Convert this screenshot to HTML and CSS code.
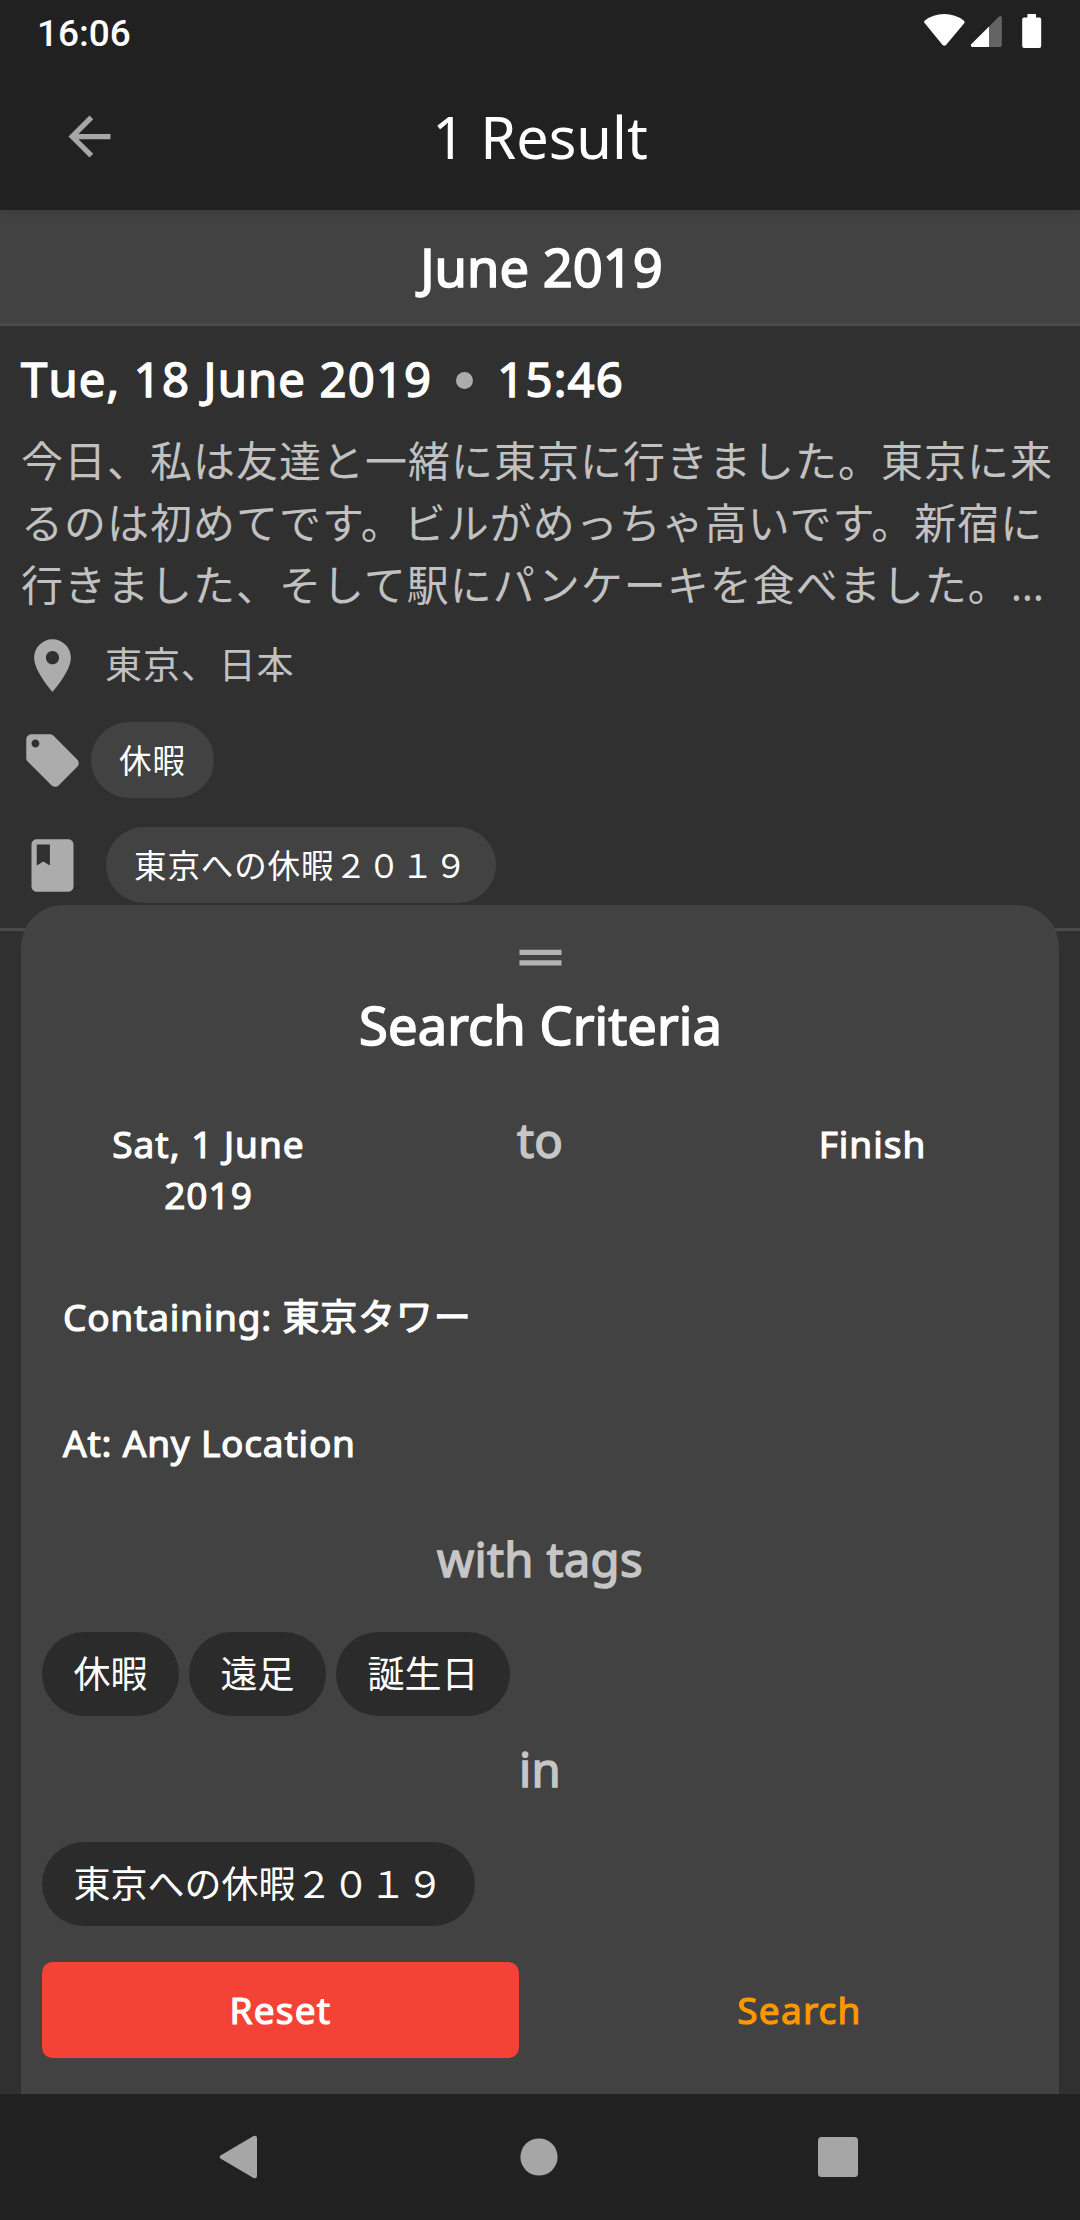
FILE: index.html
```html
<!DOCTYPE html>
<html lang="ja">
<head>
<meta charset="utf-8">
<title>1 Result</title>
<link rel="stylesheet" href="styles.css">
</head>
<body>
<div class="screen">
  <header class="top">
    <div class="status">
      <span class="clock">16:06</span>
      <svg class="status-icons" width="120" height="40" viewBox="0 0 120 40">
        <path fill="#fff" d="M1 11.6Q-.8 10 .9 8.5Q9 2 20.3 2Q31.500 2 39.700 8.500Q41.300 10 40 11.600L22 33Q20.300 34.600 18.600 33Z"/>
        <path fill="#646464" d="M65 14.500L74.500 5Q77.800 2.800 77.800 6V33Q77.800 35 75.800 35H65Z"/>
        <path fill="#fff" d="M65 14.500V35H48Q46.200 34.200 47.200 32.300Z"/>
        <path fill="#fff" d="M103.400 2h8.600v3.600h3.300q1.900 0 1.900 1.900V34q0 1.900-1.900 1.900h-15.200q-1.900 0-1.900-1.900V7.500q0-1.900 1.900-1.900h3.300Z"/>
      </svg>
    </div>
    <div class="appbar">
      <svg class="icon" viewBox="0 0 24 24"><path d="M20 11H7.830l5.590-5.590L12 4l-8 8 8 8 1.410-1.410L7.830 13H20v-2z"/></svg>
      <h1 class="title">1 Result</h1>
    </div>
  </header>

  <main class="results">
    <h2 class="month">June 2019</h2>
    <article class="entry">
      <div class="when"><span>Tue, 18 June 2019</span><i class="dot"></i><span>15:46</span></div>
      <p class="body">今日、私は友達と一緒に東京に行きました。東京に来<br>るのは初めてです。ビルがめっちゃ高いです。新宿に<br>行きました、そして駅にパンケーキを食べました。…</p>
      <div class="meta place">
        <svg class="icon" viewBox="0 0 24 24"><path d="M12 2C8.130 2 5 5.130 5 9c0 5.250 7 13 7 13s7-7.750 7-13c0-3.870-3.130-7-7-7zm0 9.500c-1.380 0-2.500-1.120-2.500-2.500s1.120-2.500 2.500-2.500 2.500 1.120 2.500 2.500-1.120 2.500-2.500 2.500z"/></svg>
        <span>東京、日本</span>
      </div>
      <div class="meta tags">
        <svg class="icon" viewBox="0 0 24 24"><path d="M21.410 11.580l-9-9C12.050 2.220 11.550 2 11 2H4c-1.100 0-2 .9-2 2v7c0 .55.220 1.050.59 1.420l9 9c.36.36.86.58 1.410.58.55 0 1.050-.22 1.410-.59l7-7c.37-.36.59-.86.59-1.410 0-.55-.23-1.060-.59-1.420zM5.500 7C4.670 7 4 6.330 4 5.500S4.670 4 5.500 4 7 4.670 7 5.500 6.330 7 5.500 7z"/></svg>
        <span class="chip">休暇</span>
      </div>
      <div class="meta journal">
        <svg class="icon" viewBox="0 0 24 24"><path d="M18 2H6c-1.100 0-2 .9-2 2v16c0 1.100.9 2 2 2h12c1.100 0 2-.9 2-2V4c0-1.100-.9-2-2-2zM6 4h5v8l-2.500-1.500L6 12V4z"/></svg>
        <span class="chip">東京への休暇２０１９</span>
      </div>
    </article>
  </main>

  <section class="sheet">
    <svg class="icon handle" viewBox="0 0 24 24"><path d="M20 9H4v2h16V9zM4 15h16v-2H4v2z"/></svg>
    <h2 class="sheet-title">Search Criteria</h2>
    <div class="range">
      <span class="date">Sat, 1 June 2019</span>
      <span class="label to">to</span>
      <span class="date">Finish</span>
    </div>
    <div class="criterion">Containing: 東京タワー</div>
    <div class="criterion">At: Any Location</div>
    <div class="label">with tags</div>
    <div class="chips"><span class="chip">休暇</span><span class="chip">遠足</span><span class="chip">誕生日</span></div>
    <div class="label">in</div>
    <div class="chips"><span class="chip">東京への休暇２０１９</span></div>
    <div class="actions">
      <button class="btn reset">Reset</button>
      <button class="btn search">Search</button>
    </div>
  </section>

  <nav class="navbar">
    <svg width="40" height="44" viewBox="0 0 40 44"><path d="M1.500 20.500L34.500 1Q38 0 38 3V41Q38 44 34.500 43L1.500 23.500Q0 22 1.500 20.500Z"/></svg>
    <svg width="38" height="38" viewBox="0 0 38 38"><circle cx="19" cy="19" r="18.600"/></svg>
    <svg width="40" height="40" viewBox="0 0 40 40"><rect width="40" height="40" rx="3.500"/></svg>
  </nav>
</div>
</body>
</html>
```
FILE: styles.css
```css
* { box-sizing: border-box; }

body {
  margin: 0;
  background: #303030;
  color: #fff;
  font-family: "Noto Sans", "Noto Sans CJK JP", sans-serif;
}

h1, h2, p { margin: 0; font-weight: 400; }

.screen {
  position: relative;
  display: flex;
  flex-direction: column;
  width: 1080px;
  height: 2220px;
  overflow: hidden;
}

.icon { width: 63px; height: 63px; fill: #acacac; flex: none; display: block; }

/* synthetic medium weight */
.month, .when, .sheet-title, .date, .label, .criterion, .btn {
  -webkit-text-stroke: 0.031em currentColor;
}

/* top bars */
.top {
  position: relative;
  height: 210px;
  background: #212121;
  box-shadow: 0 1px 8px rgba(0, 0, 0, 0.14);
}
.status {
  display: flex;
  justify-content: space-between;
  height: 63px;
  padding: 12px 36px 0 37px;
}
.clock { font: 500 37px/44px Roboto, sans-serif; }
.appbar {
  display: grid;
  grid-template-columns: 63px 1fr 63px;
  align-items: center;
  height: 147px;
  padding: 0 58px;
}
.appbar .icon { fill: #a6a6a6; }
.title { font-size: 57.75px; line-height: 78px; text-align: center; }

/* results */
.results { flex: 1; }
.month {
  height: 116px;
  padding: 21px 0 0 3px;
  background: #424242;
  border-bottom: 3px solid #4a4a4a;
  font-size: 52.5px;
  line-height: 71px;
  text-align: center;
}
.entry {
  height: 605px;
  padding: 21px 21px 0;
  border-bottom: 3px solid #4a4a4a;
}
.when {
  display: flex;
  align-items: center;
  font-size: 47.25px;
  line-height: 64px;
  letter-spacing: 1.150px;
  font-kerning: none;
}
.dot { width: 17px; height: 17px; margin: 2px 24px 0 24px; border-radius: 50%; background: #acacac; }
.body {
  margin-top: 19px;
  font-size: 42px;
  line-height: 62px;
  letter-spacing: 1px;
  color: #c1c1c1;
  white-space: nowrap;
}
.meta { display: flex; align-items: center; }
.place { height: 63px; margin-top: 18px; gap: 21px; font-size: 37px; letter-spacing: 0.900px; color: #c1c1c1; }
.place span { line-height: 61px; padding-bottom: 2px; }
.tags { margin-top: 25px; gap: 7px; }
.journal { margin-top: 29px; gap: 22px; }
.meta .chip {
  height: 76px;
  padding: 0 28px;
  border-radius: 38px;
  background: #424242;
  font-size: 32.500px;
  line-height: 78px;
  letter-spacing: 0.900px;
}

/* bottom sheet covering the lower part of the list */
.sheet {
  position: absolute;
  left: 21px;
  right: 21px;
  bottom: 126px;
  height: 1189px;
  padding: 21px 21px 0;
  border-radius: 42px 42px 0 0;
  background: #424242;
}
.handle { margin: 0 auto; fill: #b3b3b3; }
.sheet-title { padding-left: 1px; font-size: 52.5px; line-height: 71px; letter-spacing: 0.100px; text-align: center; }
.range {
  display: grid;
  grid-template-columns: repeat(3, 1fr);
  height: 194px;
  padding-top: 58px;
  text-align: center;
}
.date { padding: 0 42px 0 43px; font-size: 37px; line-height: 51px; letter-spacing: 1px; }
.label {
  margin-top: 21px;
  font-size: 47.25px;
  line-height: 64px;
  letter-spacing: 0.300px;
  text-align: center;
  color: #c6c6c6;
}
.label.to { margin-top: -10px; }
.criterion {
  height: 126px;
  padding-left: 21px;
  font-size: 37px;
  line-height: 125px;
  letter-spacing: 0.800px;
}
.chips { display: flex; gap: 10px; margin-top: 41px; }
.chips .chip {
  height: 84px;
  padding: 0 31.500px;
  border-radius: 42px;
  background: #2b2b2b;
  font-size: 37px;
  line-height: 84px;
}
.actions { display: flex; gap: 42px; margin-top: 36px; }
.btn {
  flex: 1;
  height: 96px;
  padding: 0;
  border: 0;
  border-radius: 10.500px;
  background: none;
  color: #ff9800;
  font: 37px/96px "Noto Sans", sans-serif;
  letter-spacing: 1.200px;
}
.btn.reset { background: #f44336; color: #fff; }

/* system navigation */
.navbar {
  position: relative;
  display: flex;
  justify-content: space-between;
  align-items: center;
  height: 126px;
  padding: 0 222px 0 219px;
  background: #212121;
}
.navbar svg { fill: #a6a6a6; }
```
